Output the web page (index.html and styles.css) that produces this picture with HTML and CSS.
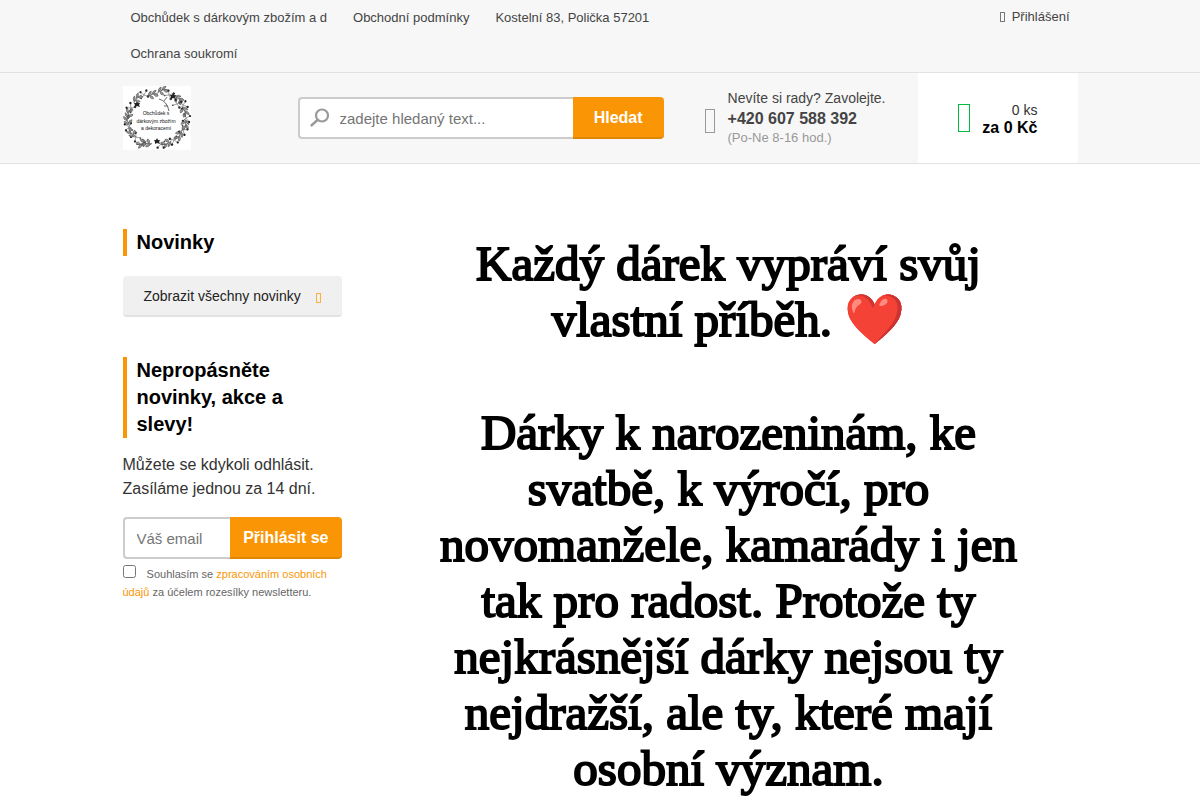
FILE: index.html
```html
<!DOCTYPE html>
<html lang="cs">
<head>
  <meta charset="UTF-8">
  <meta name="viewport" content="width=device-width, initial-scale=1.0">
  <title>Obchůdek s dárkovým zbožím a dekoracemi</title>
  <link rel="stylesheet" href="styles.css">
</head>
<body>
<div class="top-bar">
  <div class="container top-bar-inner">
    <nav class="top-nav">
      <a href="#">Obchůdek s dárkovým zbožím a d</a>
      <a href="#">Obchodní podmínky</a>
      <a href="#">Kostelní 83, Polička 57201</a>
      <a href="#">Ochrana soukromí</a>
    </nav>
    <a class="login" href="#"><span class="icon icon-user"></span>Přihlášení</a>
  </div>
</div>

<header class="header">
  <div class="container header-inner">
    <a class="logo" href="#">
      <svg viewBox="0 0 68 64" width="68" height="64">
        <defs>
          <g id="leaf">
            <path d="M-5 1Q0-2 6 0" fill="none" stroke="#444" stroke-width=".7"/>
            <path d="M-4 0q1-4 4-4q0 3-4 4M0-1q2-4 5-3q-1 3-5 3M-2 0q3 1 3 4q-4 0-3-4M2-1q4 0 4 3q-4 1-4-3" fill="#999" stroke="#333" stroke-width=".4"/>
          </g>
          <g id="berry">
            <path d="M-4 2L0 0L4-3M0 0L3 3M0 0L-2-4" fill="none" stroke="#555" stroke-width=".5"/>
            <circle cx="4" cy="-3" r="1.200" fill="#222"/>
            <circle cx="3" cy="3" r="1.300" fill="#333"/>
            <circle cx="-2" cy="-4" r="1.100" fill="#222"/>
            <circle cx="-4" cy="2" r=".8" fill="#444"/>
          </g>
          <g id="flower">
            <path d="M0-3L1-1L3-1L2 1L3 3L0 2L-2 3L-2 1L-3-1L-1-1Z" fill="#222"/>
          </g>
        </defs>
        <rect width="68" height="64" fill="#fff"/>
        <use href="#leaf" transform="translate(39 5) rotate(-12)"/>
        <use href="#berry" transform="translate(46 9) rotate(20)"/>
        <use href="#flower" transform="translate(50 10)"/>
        <use href="#leaf" transform="translate(55 13) rotate(50)"/>
        <use href="#berry" transform="translate(54 18) rotate(10)"/>
        <use href="#berry" transform="translate(60 19) rotate(60)"/>
        <use href="#leaf" transform="translate(61 25) rotate(75)"/>
        <use href="#berry" transform="translate(63 32) rotate(90)"/>
        <use href="#leaf" transform="translate(62 38) rotate(100)"/>
        <use href="#berry" transform="translate(60 44) rotate(110)"/>
        <use href="#leaf" transform="translate(56 49) rotate(130)"/>
        <use href="#berry" transform="translate(51 54) rotate(150)"/>
        <use href="#leaf" transform="translate(44 57) rotate(165)"/>
        <use href="#berry" transform="translate(38 58) rotate(170)"/>
        <use href="#flower" transform="translate(34 55)"/>
        <use href="#leaf" transform="translate(24 57) rotate(200)"/>
        <use href="#leaf" transform="translate(19 57) rotate(165)"/>
        <use href="#berry" transform="translate(13 51) rotate(220)"/>
        <use href="#leaf" transform="translate(9 47) rotate(235)"/>
        <use href="#berry" transform="translate(6 41) rotate(250)"/>
        <use href="#leaf" transform="translate(5 35) rotate(265)"/>
        <use href="#leaf" transform="translate(6 28) rotate(290)"/>
        <use href="#berry" transform="translate(8 22) rotate(300)"/>
        <use href="#flower" transform="translate(14 18)"/>
        <use href="#leaf" transform="translate(14 13) rotate(320)"/>
        <use href="#berry" transform="translate(21 9) rotate(335)"/>
        <use href="#leaf" transform="translate(29 9) rotate(350)"/>
        <path d="M36 13Q44 15 46 25M41 15l3-4M45 20l-4 0" fill="none" stroke="#444" stroke-width=".8"/>
        <text class="logo-text" x="33" y="29">Obchůdek s</text>
        <text class="logo-text" x="33" y="37">dárkovým zbožím</text>
        <text class="logo-text" x="33" y="44">a dekoracemi</text>
      </svg>
    </a>

    <form class="search" action="#" method="get">
      <div class="search-field">
        <svg class="search-icon" viewBox="0 0 20 20" width="20" height="20">
          <circle cx="12" cy="7.500" r="6" fill="none" stroke="#999" stroke-width="2.200"/>
          <path d="M7.500 12L.8 18" stroke="#999" stroke-width="2.400"/>
        </svg>
        <input type="text" name="q" placeholder="zadejte hledaný text..." aria-label="Hledat">
      </div>
      <button class="btn" type="submit">Hledat</button>
    </form>

    <div class="phone">
      <span class="icon icon-phone"></span>
      <div>
        <div class="phone-title">Nevíte si rady? Zavolejte.</div>
        <div class="phone-number">+420 607 588 392</div>
        <div class="phone-hours">(Po-Ne 8-16 hod.)</div>
      </div>
    </div>

    <a class="cart" href="#">
      <span class="icon icon-cart"></span>
      <span class="cart-text">0 ks<strong>za 0 Kč</strong></span>
    </a>
  </div>
</header>

<div class="container page">
  <aside class="sidebar">
    <section>
      <h3>Novinky</h3>
      <a class="btn-news" href="#">Zobrazit všechny novinky<span class="icon icon-arrow"></span></a>
    </section>
    <section>
      <h3>Nepropásněte novinky, akce a slevy!</h3>
      <p class="newsletter-text">Můžete se kdykoli odhlásit. Zasíláme jednou za 14 dní.</p>
      <form action="#" method="post">
        <div class="newsletter-row">
          <input type="email" name="email" placeholder="Váš email" aria-label="Váš email">
          <button class="btn" type="submit">Přihlásit se</button>
        </div>
        <div class="agree">
          <input type="checkbox" id="agree" name="agree">
          <label for="agree">Souhlasím se <a href="#">zpracováním osobních údajů</a> za účelem rozesílky newsletteru.</label>
        </div>
      </form>
    </section>
  </aside>

  <main class="content">
    <p class="quote">
      Každý dárek vypráví svůj<br>
      vlastní příběh. ❤️
    </p>
    <p class="quote">
      Dárky k narozeninám, ke<br>
      svatbě, k výročí, pro<br>
      novomanžele, kamarády i jen<br>
      tak pro radost. Protože ty<br>
      nejkrásnější dárky nejsou ty<br>
      nejdražší, ale ty, které mají<br>
      osobní význam.
    </p>
  </main>
</div>
</body>
</html>
```

FILE: styles.css
```css
* {
  box-sizing: border-box;
}

body {
  margin: 0;
  font-family: "Liberation Sans", Arial, sans-serif;
  font-size: 16px;
  color: #333;
  background-color: #fff;
}

a {
  color: inherit;
  text-decoration: none;
}

.container {
  max-width: 955px;
  margin: 0 auto;
}

/* icons */
.icon {
  display: inline-block;
  flex: none;
  border: 1px solid #999;
}

.icon-user {
  width: 5px;
  height: 10px;
  margin-right: 7px;
  border-color: #777;
}

.icon-phone {
  width: 10px;
  height: 24px;
  margin: 5px 13px 0 0;
}

.icon-cart {
  width: 12px;
  height: 28px;
  border-color: #00b93f;
}

.icon-arrow {
  width: 5px;
  height: 10px;
  margin-top: 4px;
  border-color: #fbb040;
}

/* top bar */
.top-bar {
  background-color: #f7f7f7;
  border-bottom: 1px solid #e2e2e2;
  font-size: 13px;
  color: #444;
}

.top-bar-inner {
  display: flex;
  justify-content: space-between;
  align-items: flex-start;
  padding: 0 8px;
}

.top-nav {
  display: flex;
  flex-wrap: wrap;
  column-gap: 26px;
  width: 66%;
  line-height: 36px;
}

.login {
  display: flex;
  align-items: center;
  line-height: 34px;
}

/* header */
.header {
  background-color: #f7f7f7;
  border-bottom: 1px solid #e2e2e2;
}

.header-inner {
  display: flex;
  align-items: center;
  min-height: 90px;
}

.logo {
  flex: none;
  margin-right: 107px;
}

.logo svg {
  display: block;
}

.logo-text {
  font-size: 5px;
  text-anchor: middle;
  fill: #111;
}

.search {
  display: flex;
  flex: 1;
}

.search-field {
  display: flex;
  align-items: center;
  flex: 1;
  min-width: 0;
  height: 42px;
  padding-left: 10px;
  background-color: #fff;
  border: 2px solid #ccc;
  border-right: none;
  border-radius: 4px 0 0 4px;
}

.search-field input {
  flex: 1;
  min-width: 0;
  padding: 0 10px;
  border: none;
  outline: none;
  background: none;
  font-family: inherit;
  font-size: 15px;
}

.btn {
  height: 42px;
  padding: 2px 21px 0;
  border: none;
  border-bottom: 2px solid #e08600;
  border-radius: 0 4px 4px 0;
  background-color: #fa9605;
  color: #fff;
  font-family: inherit;
  font-size: 16px;
  font-weight: bold;
  white-space: nowrap;
  cursor: pointer;
}

.phone {
  display: flex;
  align-items: center;
  margin: 0 32px 0 41px;
}

.phone-title {
  font-size: 14px;
  line-height: 20px;
  color: #444;
}

.phone-number {
  font-weight: bold;
  line-height: 22px;
  color: #444;
}

.phone-hours {
  padding-bottom: 3px;
  font-size: 13px;
  line-height: 15px;
  color: #999;
}

.cart {
  display: flex;
  align-items: center;
  align-self: stretch;
  justify-content: space-between;
  width: 160px;
  padding: 0 40px;
  background-color: #fff;
}

.cart-text {
  padding-top: 2px;
  font-size: 14px;
  line-height: 18px;
  text-align: right;
}

.cart-text strong {
  display: block;
  font-size: 16px;
  color: #000;
}

/* page */
.page {
  display: flex;
  gap: 38px;
  padding-top: 65px;
}

.sidebar {
  flex: none;
  width: 219px;
}

.sidebar section {
  margin-bottom: 40px;
}

.sidebar h3 {
  margin: 0 0 20px;
  padding-left: 10px;
  border-left: 4px solid #fa9605;
  font-size: 20px;
  line-height: 27px;
  color: #000;
}

.btn-news {
  display: flex;
  align-items: center;
  justify-content: space-between;
  height: 41px;
  padding: 0 21px;
  border-bottom: 2px solid #e2e2e2;
  border-radius: 4px;
  background-color: #f0f0f0;
  font-size: 14px;
  color: #222;
}

.newsletter-text {
  margin: -5px 0 16px;
  line-height: 24px;
}

.newsletter-row {
  display: flex;
}

.newsletter-row input {
  flex: 1;
  min-width: 0;
  height: 42px;
  padding: 0 0 0 12px;
  border: 2px solid #ccc;
  border-right: none;
  border-radius: 4px 0 0 4px;
  font-family: inherit;
  font-size: 15px;
}

.newsletter-row .btn {
  padding: 2px 13px 0;
}

.agree {
  margin-top: 6px;
  font-size: 11px;
  line-height: 18px;
  color: #666;
}

.agree input {
  width: 13px;
  height: 13px;
  margin: 0 8px 0 0;
}

.agree a {
  color: #fa9605;
}

.content {
  flex: 1;
  min-width: 0;
  padding-top: 7px;
}

.quote {
  margin: 0 0 57px;
  font-family: "Liberation Serif", "Times New Roman", serif;
  font-size: 49px;
  line-height: 56px;
  text-align: center;
  color: #000;
  -webkit-text-stroke: 2px #000;
}

.quote:last-child {
  margin-bottom: 0;
}
```
